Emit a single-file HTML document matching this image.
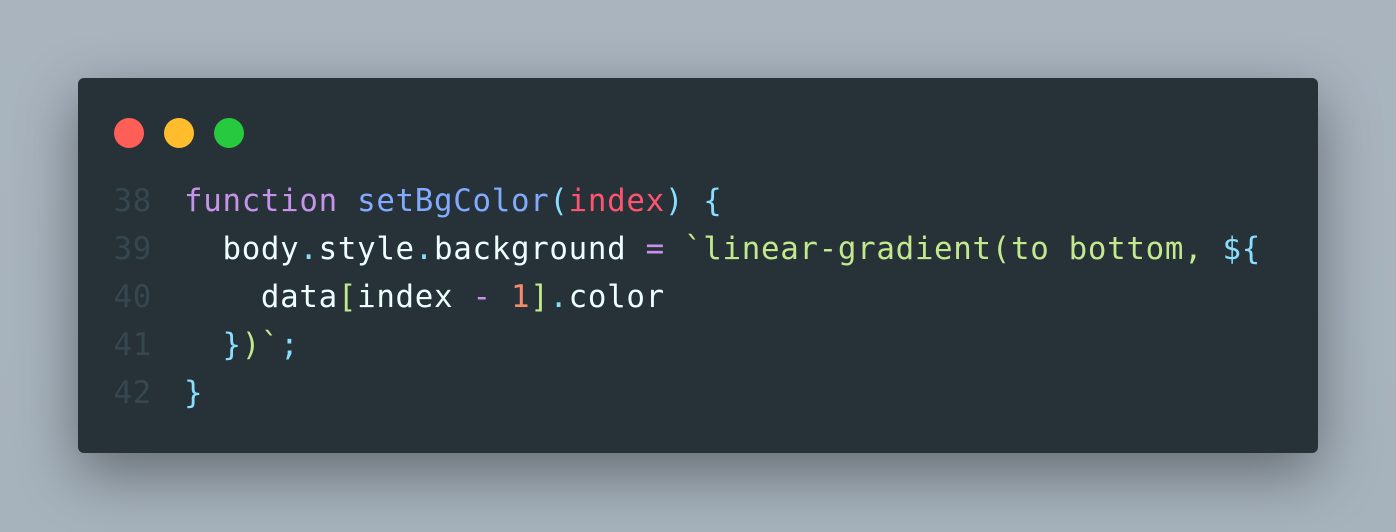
<!DOCTYPE html>
<html><head><style>
html,body{margin:0;padding:0;}
body{width:1396px;height:532px;background:linear-gradient(180deg,#a9b4bf,#a6b2bc);position:relative;overflow:hidden;}
.win{position:absolute;left:78px;top:78px;width:1240px;height:375px;background:#263238;border-radius:6px;box-shadow:0 20px 60px rgba(0,0,0,0.4);}
.dot{position:absolute;top:40px;width:30px;height:30px;border-radius:50%;}
.code{position:absolute;left:0;top:99px;font-family:"DejaVu Sans Mono","Liberation Mono",monospace;font-size:30.8px;letter-spacing:0.69px;line-height:48px;white-space:pre;color:#eeffff;}
.ln{display:inline-block;width:74px;text-align:right;color:#37474f;margin-right:32px;}
.k{color:#c792ea}.f{color:#82aaff}.p{color:#89ddff}.v{color:#ff5370}.s{color:#c3e88d}.n{color:#f78c6c}
</style></head><body>
<div class="win">
<div class="dot" style="left:36px;background:#ff5f56"></div>
<div class="dot" style="left:86px;background:#ffbd2e"></div>
<div class="dot" style="left:136px;background:#27c93f"></div>
<div class="code"><div><span class="ln">38</span><span class="k">function</span> <span class="f">setBgColor</span><span class="p">(</span><span class="v">index</span><span class="p">)</span> <span class="p">{</span></div><div><span class="ln">39</span>  body<span class="p">.</span>style<span class="p">.</span>background <span class="k">=</span> <span class="s">`linear-gradient(to bottom, </span><span class="p">${</span></div><div><span class="ln">40</span>    data<span class="s">[</span>index <span class="k">-</span> <span class="n">1</span><span class="s">]</span><span class="p">.</span>color</div><div><span class="ln">41</span>  <span class="p">}</span><span class="s">)`</span><span class="p">;</span></div><div><span class="ln">42</span><span class="p">}</span></div></div>
</div>
</body></html>
